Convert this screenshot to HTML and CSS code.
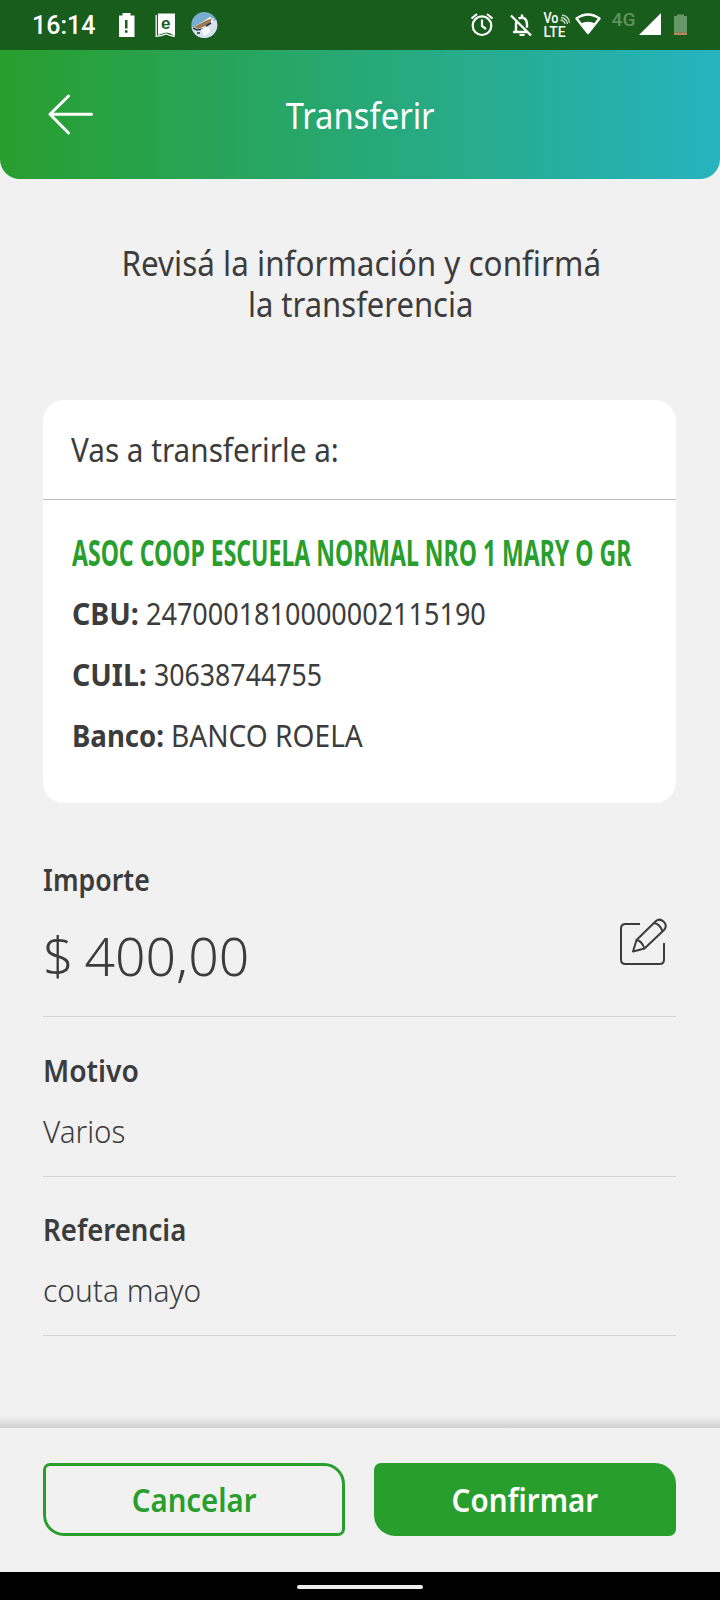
FILE: index.html
```html
<!DOCTYPE html>
<html lang="es">
<head>
<meta charset="utf-8">
<title>Transferir</title>
<link rel="stylesheet" href="styles.css">
</head>
<body>
<header class="status">
  <span class="clock">16:14</span>
  <svg class="status-icons" width="720" height="50" viewBox="0 0 720 50">
    <!-- battery alert -->
    <path fill="#fff" fill-rule="evenodd" d="M119 15.500h3.500V13h8v2.500h4V37h-15.500zM125 20v8.500h2.500V20zM125 30.300v2.500h2.500v-2.500z"/>
    <!-- bookmark -->
    <path fill="#fff" d="M158 13.500h17V36l-4.500-2.500-4-1-4 1-4.500 1.500z"/>
    <path fill="none" stroke="#fff" stroke-width="1.300" d="M156.200 15v21.300l5-.8 5-1.500 4 1.500 4.500 1"/>
    <text x="161" y="28.500" class="glyph-e">e</text>
    <!-- round photo -->
    <clipPath id="round"><circle cx="204.300" cy="25" r="13"/></clipPath>
    <g clip-path="url(#round)">
      <path fill="#79add0" d="M191 12h27v26h-27z"/>
      <path fill="#d9e2ea" d="M191 28l10-5 17-3v18h-27z"/>
      <path fill="#fff" d="M193 28l17-11 4 2-3 4-15 7z"/>
      <path fill="#9c7c50" d="M194 27l11-6 7-3-2 6-12 5z"/>
      <path fill="none" stroke="#263347" stroke-width="1.600" d="M193 28l4 2 6-1M197 33h3M206 26l5-3"/>
      <path fill="#f9fafb" d="M201 29l8-2 1 5-6 4z"/>
    </g>
    <!-- alarm -->
    <g fill="none" stroke="#fff" stroke-width="2.200">
      <circle cx="482" cy="25.700" r="9.300"/>
      <path d="M482 19.500v6.500l4 3M471.500 18.500l5.500-4.500M492.500 18.500l-5.500-4.500"/>
    </g>
    <!-- muted bell -->
    <g fill="none" stroke="#fff" stroke-width="2.400">
      <path d="M511 15.500l20 20M513 32h14.500M516 32v-8q0-2 1-3.500M518.500 18.300q8.500-2.500 8.500 6.500v3M522 14.500v3"/>
      <path d="M519.500 35h5" stroke-width="2"/>
    </g>
    <text x="543.500" y="22.500" class="volte" textLength="15" lengthAdjust="spacingAndGlyphs">Vo</text>
    <text x="543.500" y="36.500" class="volte" textLength="22" lengthAdjust="spacingAndGlyphs">LTE</text>
    <path fill="none" stroke="#c5d8c5" stroke-width="1.300" d="M560.500 20q4 .5 4.500 4M561 17.500q6 1 6.500 6.500M562 15q7 1 7.500 8"/>
    <!-- wifi -->
    <path fill="none" stroke="#fff" stroke-width="2.400" stroke-linejoin="round" d="M576.500 18.500q11.500-8 23 0L588 33z"/>
    <path fill="#fff" d="M580 24q8-4.500 16 0l-8 10z"/>
    <text x="611.500" y="26.300" class="net" textLength="24" lengthAdjust="spacingAndGlyphs">4G</text>
    <path fill="#fff" d="M661 13v22h-22z"/>
    <!-- battery -->
    <path fill="#669768" d="M674 16h3v-1.500h7V16h3v16.500h-13z"/>
    <path fill="#b98a5c" d="M674 32.500h13v2.500h-13z"/>
  </svg>
</header>
<div class="appbar">
  <svg class="back" width="48" height="44" viewBox="0 0 48 44" fill="none" stroke="#fff" stroke-width="3" stroke-linecap="round" stroke-linejoin="round"><path d="M44.500 21.300H3M21.500 3L3 21.300 21.500 40"/></svg>
  <h1 class="title"><span class="t">Transferir</span></h1>
</div>
<main class="content">
  <p class="intro"><span class="t intro-1">Revisá la información y confirmá</span><span class="t intro-2">la transferencia</span></p>
  <section class="card">
    <div class="card-head"><span class="t">Vas a transferirle a:</span></div>
    <div class="card-body">
      <div class="name"><span class="t">ASOC COOP ESCUELA NORMAL NRO 1 MARY O GR</span></div>
      <div class="row cbu"><b><span class="t">CBU:</span></b><span class="t">2470001810000002115190</span></div>
      <div class="row cuil"><b><span class="t">CUIL:</span></b><span class="t">30638744755</span></div>
      <div class="row bank"><b><span class="t">Banco:</span></b><span class="t">BANCO ROELA</span></div>
    </div>
  </section>
  <section class="field amount">
    <div class="label"><span class="t">Importe</span></div>
    <div class="value"><span class="t">$ 400,00</span>
      <svg class="edit" width="50" height="50" viewBox="0 0 50 50" fill="none" stroke="#3c3c3c" stroke-width="2" stroke-linejoin="round"><path d="M21 7H6.500Q2 7 2 11.500v31Q2 47 6.500 47h34q4.500 0 4.500-4.500V26"/><path d="M14 34.500l3.500-11.500L37 4q3.500-3 7.500.5t1 8L25.500 31.500zM17.500 23q5 .5 8 8.500M35 6q6 1 8.500 8.500"/></svg>
    </div>
  </section>
  <section class="field reason">
    <div class="label"><span class="t">Motivo</span></div>
    <div class="value"><span class="t">Varios</span></div>
  </section>
  <section class="field reference">
    <div class="label"><span class="t">Referencia</span></div>
    <div class="value"><span class="t">couta mayo</span></div>
  </section>
</main>
<div class="footer-shadow"></div>
<footer class="actions">
  <button class="btn cancel"><span class="t">Cancelar</span></button>
  <button class="btn confirm"><span class="t">Confirmar</span></button>
</footer>
<div class="navbar"><span class="pill"></span></div>
</body>
</html>
```
FILE: styles.css
```css
* { box-sizing: border-box; }
body {
  margin: 0;
  width: 720px;
  height: 1600px;
  overflow: hidden;
  display: flex;
  flex-direction: column;
  background: #f1f1f1;
  color: #3c3c3c;
  font-family: "Noto Sans", "Open Sans", sans-serif;
}
/* Text runs are narrowed horizontally by --w */
.t { display: inline-block; white-space: nowrap; transform: scaleX(var(--w, 1)); transform-origin: 0 50%; }
.title .t, .intro .t, .btn .t { transform-origin: 50% 50%; }

.status { position: relative; height: 50px; background: #185d1c; color: #fff; }
.clock { position: absolute; left: 32px; top: 8px; font: 500 25px/36px Roboto, sans-serif; }
.status-icons { display: block; }
.glyph-e { font: bold 17px "Liberation Sans", sans-serif; fill: #185d1c; }
.volte { font: 500 14px Roboto, sans-serif; fill: #fff; }
.net { font: 500 18px Roboto, sans-serif; fill: #5d925f; }

.appbar {
  display: flex;
  align-items: flex-start;
  height: 129px;
  padding: 43px 46px 0 47px;
  border-radius: 0 0 20px 20px;
  background: linear-gradient(90deg, #289e2d, #26b3bf);
  color: #fff;
}
.title { --w: .885; flex: 1; margin: 0 48px 0 0; text-align: center; font-weight: 440; font-size: 37px; line-height: 44px; }

.content { height: 1237px; padding: 64px 44px 0 43px; }
.intro { display: flex; flex-direction: column; align-items: center; margin: 0; padding-left: 3px; font-size: 34px; line-height: 41px; }
.intro-1 { --w: .925; }
.intro-2 { --w: .912; }

.card { height: 403px; margin-top: 75px; border-radius: 21px; background: #fff; }
.card-head { --w: .9; height: 100px; padding: 30px 28px 0; border-bottom: 1px solid #b9bdbb; font-size: 33px; line-height: 40px; }
.card-body { padding: 32px 29px 0; }
.name { --w: .64; height: 64px; overflow: hidden; color: #289e2d; font-size: 36px; font-weight: 660; line-height: 42px; }
.row { display: flex; height: 61px; font-size: 30px; line-height: 36px; }
.cbu { --w: .9; }
.cbu b { --w: .95; width: 73.500px; }
.cuil { --w: .89; }
.cuil b { --w: .95; width: 82px; }
.bank { --w: .937; }
.bank b { --w: .92; width: 99px; }

.field { border-bottom: 1px solid #d3d3d3; }
.label { font-size: 30px; font-weight: 600; line-height: 40px; }
.value { display: flex; justify-content: space-between; font-size: 31px; font-weight: 330; line-height: 40px; }
.amount { height: 174px; margin-top: 40px; padding-top: 17px; }
.amount .label { --w: .89; }
.amount .value { --w: 1; padding: 18px 7px 0 0; font-size: 53.500px; line-height: 76px; word-spacing: -3px; }
.edit { margin-top: -1px; }
.reason { height: 160px; padding-top: 34px; }
.reference { height: 159px; padding-top: 33px; }
.reason .value, .reference .value { margin-top: 20px; }
.reason .label { --w: .94; }
.reason .value { --w: .955; }
.reference .label { --w: .92; }
.reference .value { --w: .965; }

.footer-shadow { height: 12px; background: linear-gradient(#f1f1f1, #cfcfcf); }
.actions { display: flex; gap: 29px; height: 144px; padding: 35px 44px 0 43px; }
.btn { flex: 1; height: 73px; margin: 0; padding: 0; border: 3px solid #289e2d; border-radius: 7px 21px 7px 21px; font: 600 33px/60px "Noto Sans", sans-serif; }
.cancel { --w: .89; background: none; color: #289e2d; }
.confirm { --w: .895; background: #289e2d; color: #fff; }

.navbar { display: flex; justify-content: center; height: 28px; padding-top: 13px; background: #000; }
.pill { width: 126px; height: 4px; border-radius: 2px; background: #eee; }
```
